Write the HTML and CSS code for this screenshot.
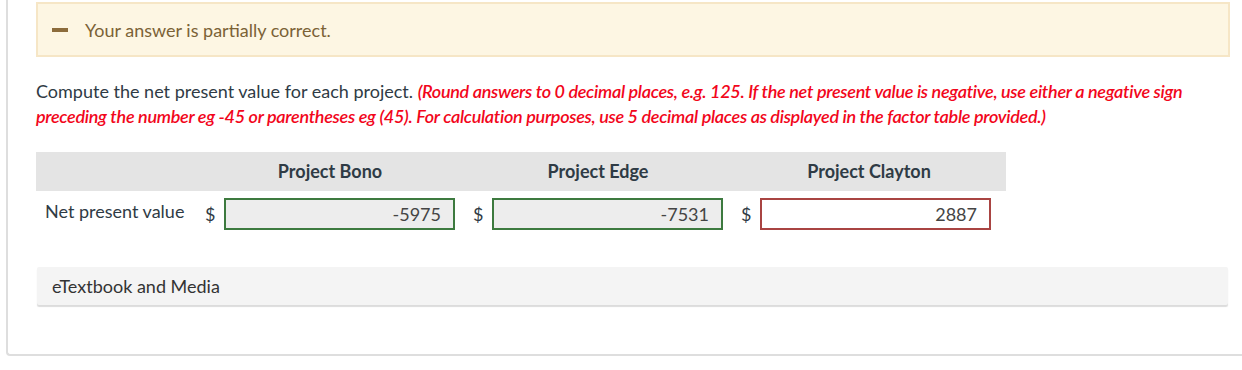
FILE: index.html
```html
<!DOCTYPE html>
<html lang="en">
<head>
    <meta charset="UTF-8">
    <title>Net Present Value</title>
    <link rel="stylesheet" href="styles.css">
</head>
<body>
    <div class="question">
        <div class="notice">
            <span class="dash"></span>
            <span>Your answer is partially correct.</span>
        </div>

        <p class="prompt">
            Compute the net present value for each project.
            <em class="hint">(Round answers to 0 decimal places, e.g. 125. If the net present value is negative, use either a negative sign preceding the number eg -45 or parentheses eg (45). For calculation purposes, use 5 decimal places as displayed in the factor table provided.)</em>
        </p>

        <div class="answers">
            <div class="head"></div>
            <div class="head">Project Bono</div>
            <div class="head">Project Edge</div>
            <div class="head">Project Clayton</div>

            <div class="label">Net present value</div>
            <div class="cell">
                <span class="cur">$</span>
                <input class="field ok" type="text" value="-5975" readonly>
            </div>
            <div class="cell">
                <span class="cur">$</span>
                <input class="field ok" type="text" value="-7531" readonly>
            </div>
            <div class="cell">
                <span class="cur">$</span>
                <input class="field wrong" type="text" value="2887" readonly>
            </div>
        </div>

        <div class="media">eTextbook and Media</div>
    </div>
</body>
</html>
```

FILE: styles.css
```css
* {
    margin: 0;
    padding: 0;
    box-sizing: border-box;
    font-family: Lato, 'Open Sans', sans-serif;
}

body {
    background: #fff;
    color: #2f3b45;
    font-size: 18px;
    overflow: hidden;
}

.question {
    margin-left: 6px;
    width: 1250px;
    padding: 2px 20px 49px 28px;
    border-left: 2px solid #dedede;
    border-bottom: 2px solid #dedede;
    border-bottom-left-radius: 4px;
}

.notice {
    width: 1194px;
    height: 55px;
    display: flex;
    align-items: center;
    padding-left: 14px;
    background: #fdf6e3;
    border: 2px solid #f6e6c6;
    color: #7b6236;
}

.dash {
    width: 16px;
    height: 4px;
    margin-right: 17px;
    background: #8c6c3c;
}

.prompt {
    margin-top: 22px;
    line-height: 25px;
    width: 1180px;
}

.hint {
    color: #f2061b;
    font-weight: 600;
    letter-spacing: -0.3px;
}

.answers {
    display: grid;
    grid-template-columns: 160px 268px 268px 274px;
    width: 970px;
    margin-top: 23px;
}

.head {
    height: 39px;
    background: #e4e4e4;
    font-weight: 700;
    text-align: center;
    line-height: 39px;
}

.label {
    padding-left: 9px;
    line-height: 40px;
}

.cell {
    display: flex;
    align-items: center;
    padding: 5px 0 0 9px;
    gap: 9px;
}

.cur {
    width: 10px;
}

.field {
    width: 231px;
    height: 32px;
    padding: 0 12px;
    text-align: right;
    font-size: 18px;
    color: #444;
    border: 2px solid #3d7a3f;
    background: #ededed;
    outline: none;
}

.field.wrong {
    border-color: #a94442;
    background: #fff;
}

.media {
    margin-top: 36px;
    width: 1191px;
    height: 38px;
    margin-left: 1px;
    padding-left: 15px;
    line-height: 38px;
    background: #f4f4f4;
    box-shadow: 0 2px 1px #dcdcdc;
    color: #333;
    border-radius: 2px;
}
```
